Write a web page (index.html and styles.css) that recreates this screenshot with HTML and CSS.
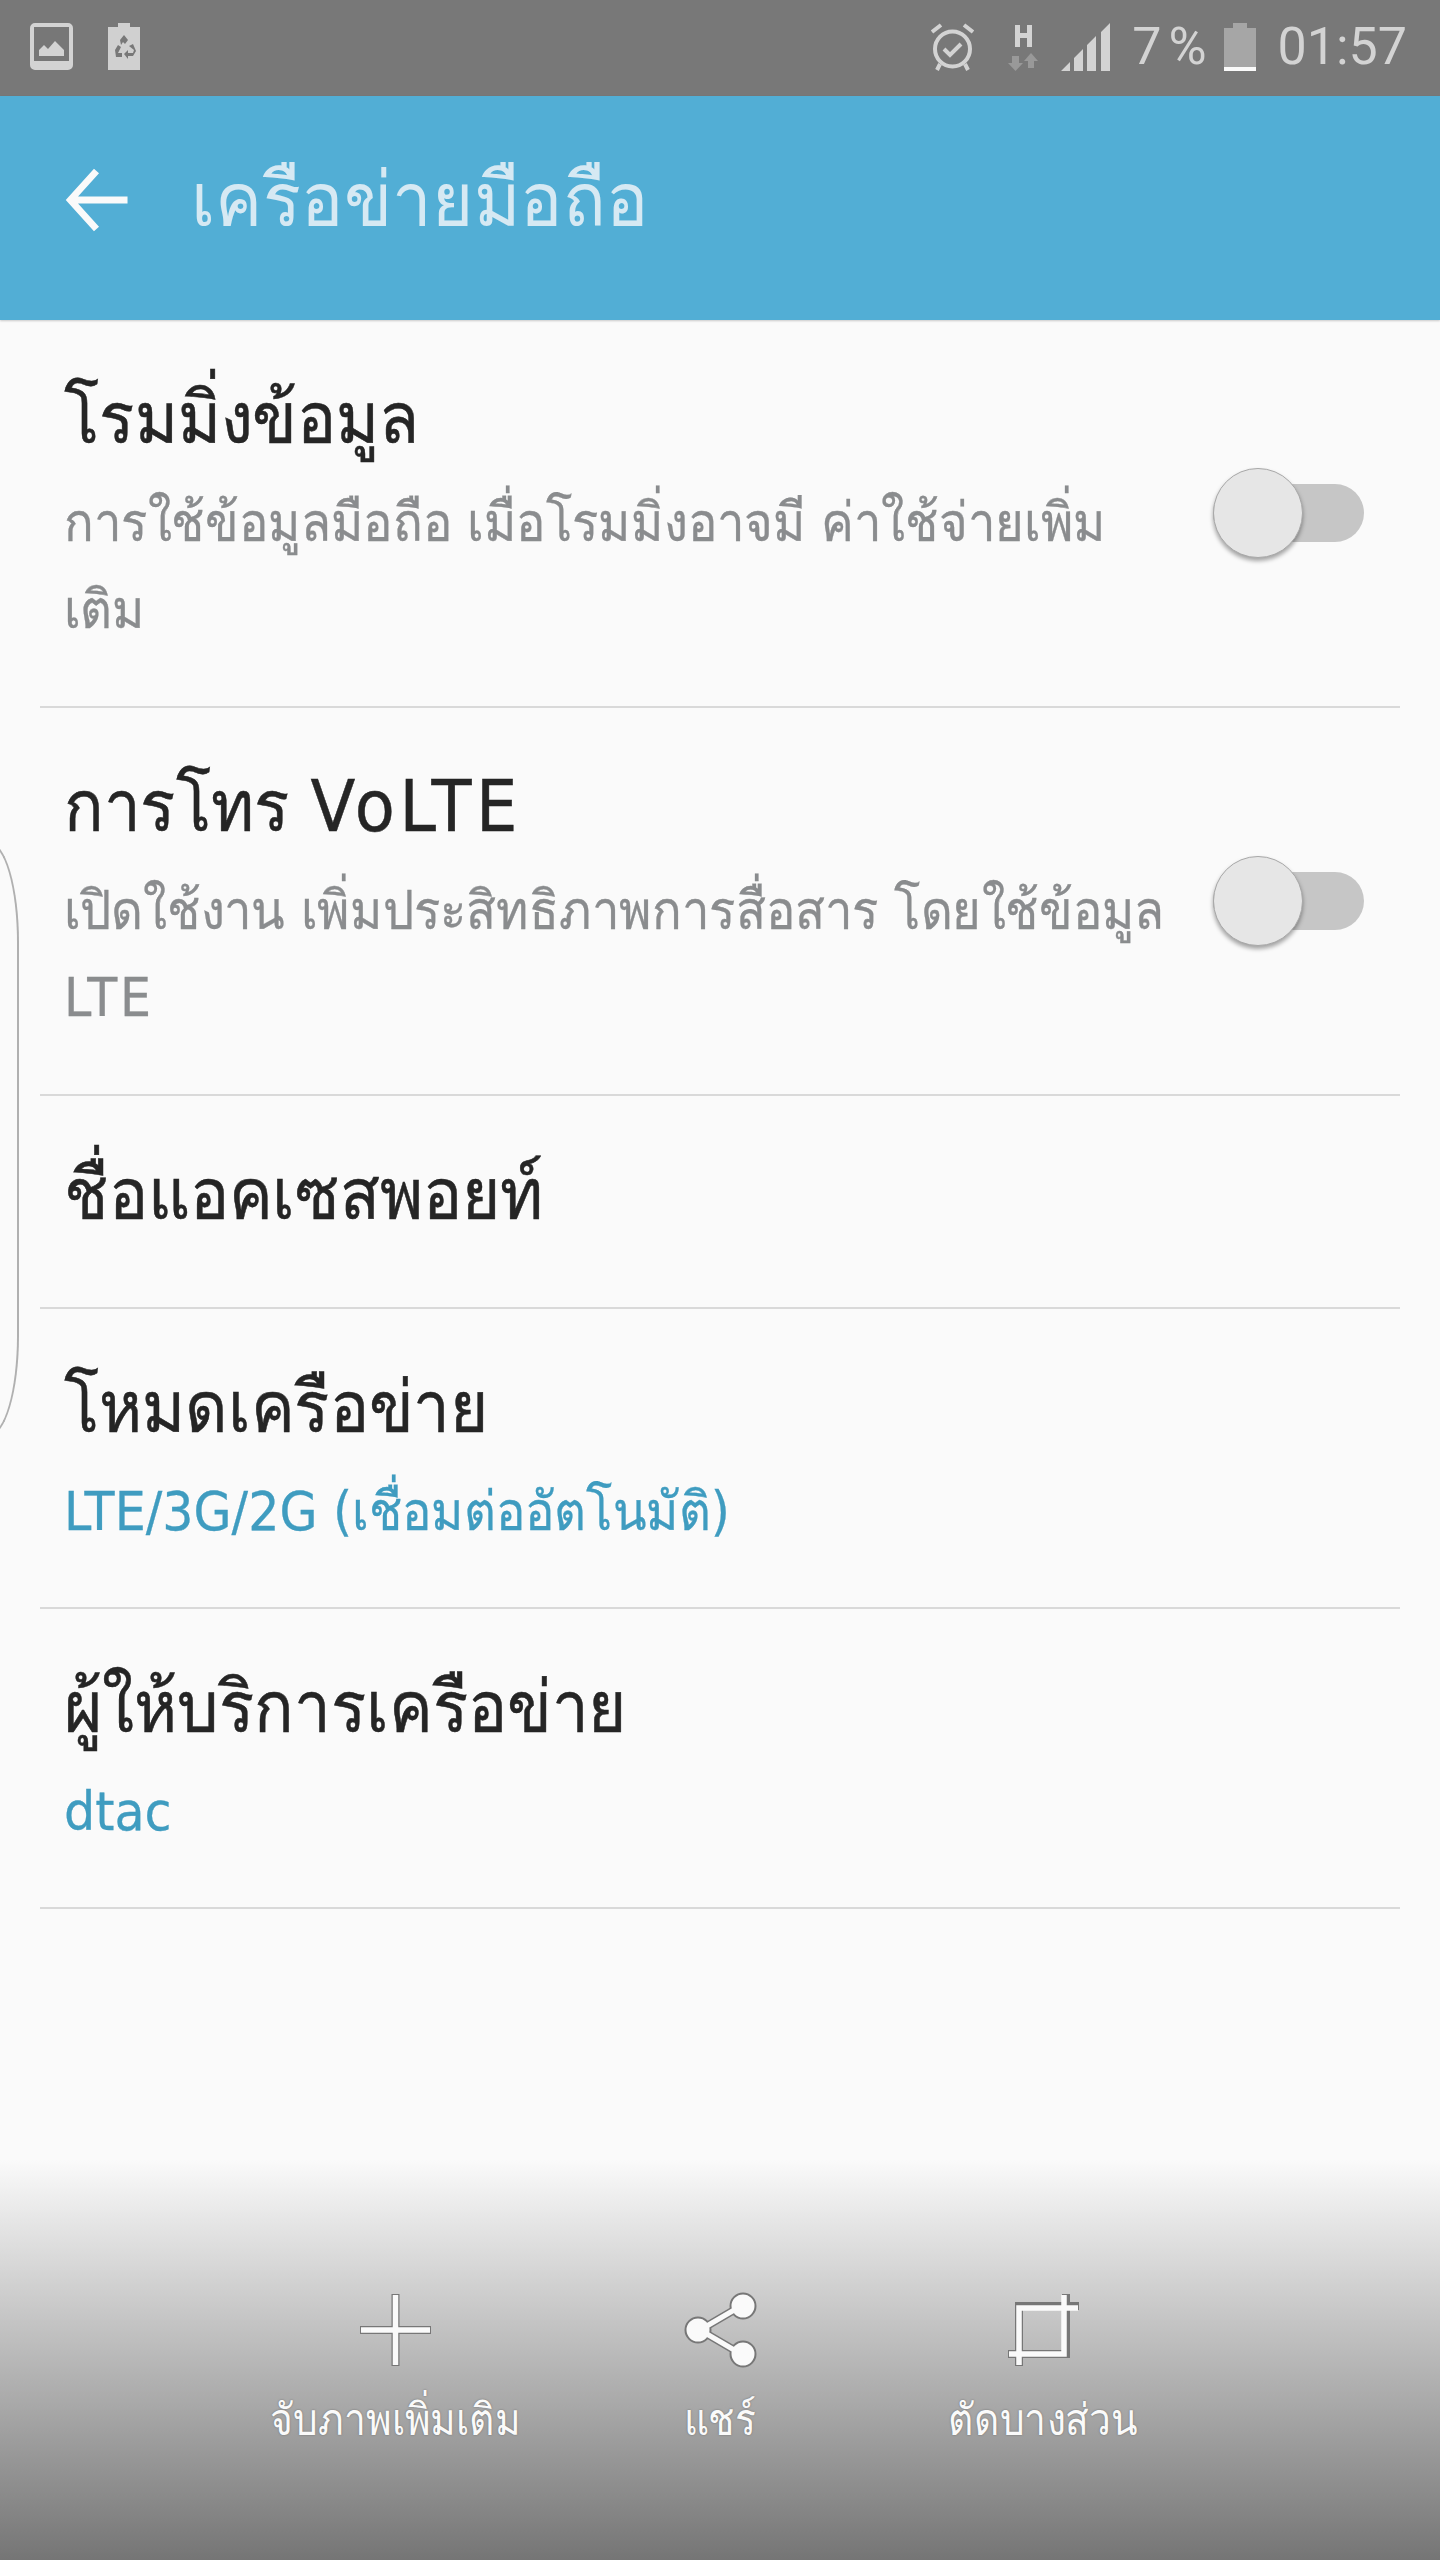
FILE: index.html
```html
<!DOCTYPE html>
<html lang="th">
<head>
<meta charset="utf-8">
<title>เครือข่ายมือถือ</title>
<link rel="stylesheet" href="styles.css">
</head>
<body>
<div class="phone">
  <div class="status">
    <div class="status-left">
      <svg class="ic-gallery" viewBox="0 0 43 47"><rect x="2" y="2" width="39" height="43" rx="3" fill="none" stroke="#d3d3d3" stroke-width="4"/><rect x="4" y="4" width="35" height="39" fill="#777"/><rect x="4" y="38" width="35" height="6" fill="#d3d3d3"/><path d="M9 33v-6l5-5 4 4 7-8 9 9v6z" fill="#d3d3d3"/></svg>
      <svg class="ic-recycle" viewBox="0 0 32 47"><path d="M10 0h12v4h10v43H0V4h10z" fill="#d0d0d0"/><path d="M12 17l4-5 4 5-3 4-2-2-2 3zM7 27l3-5 3 2-3 6h4v4H8zM21 23l4-2 3 7-3 5h-5v3l-4-5 4-4v3h5l1-3z" fill="#787878"/></svg>
    </div>
    <div class="status-right">
      <svg class="ic-alarm" viewBox="0 0 43 48"><path d="M1 9l9-7M42 9l-9-7" stroke="#d3d3d3" stroke-width="4" fill="none"/><circle cx="21.500" cy="26" r="17.500" fill="none" stroke="#d3d3d3" stroke-width="4"/><path d="M13 26l6 6 11-11" fill="none" stroke="#d3d3d3" stroke-width="4"/><path d="M9 41l-3 6M34 41l3 6" stroke="#d3d3d3" stroke-width="4"/></svg>
      <svg class="ic-net" viewBox="0 0 30 48"><path d="M9.500 2v22M21.500 2v22M9.500 12.500h12" stroke="#d3d3d3" stroke-width="5" fill="none"/><path d="M4 33h7v7h4l-7.500 8L0 40h4zM20 45v-7h-4l7-8 7 8h-4v7z" fill="#999"/></svg>
      <svg class="ic-signal" viewBox="0 0 49 48"><path d="M0 48l9-9v9zM13 48V35l9-9v22zM26 48V22l9-9v35zM40 48V9l9-9v48z" fill="#d3d3d3"/></svg>
      <span class="pct">7%</span>
      <svg class="ic-batt" viewBox="0 0 32 48"><path d="M9 0h14v5h9v43H0V5h9z" fill="#a6a6a6"/><rect y="44" width="32" height="4" fill="#fafafa"/></svg>
      <span class="clock">01:57</span>
    </div>
  </div>

  <header class="appbar">
    <svg class="ic-back" viewBox="0 0 64 66"><path d="M64 33H6M32 3L5 33l27 30" fill="none" stroke="#fafafa" stroke-width="7"/></svg>
    <h1 class="appbar-title">เครือข่ายมือถือ</h1>
  </header>

  <main class="list">
    <div class="row row-a">
      <div class="row-text">
        <div class="title">โรมมิ่งข้อมูล</div>
        <div class="sub">การใช้ข้อมูลมือถือ เมื่อโรมมิ่งอาจมี ค่าใช้จ่ายเพิ่ม<br>เติม</div>
      </div>
      <div class="switch"><span class="thumb"></span></div>
    </div>
    <div class="row row-a">
      <div class="row-text">
        <div class="title">การโทร <span class="lat-title">VoLTE</span></div>
        <div class="sub">เปิดใช้งาน เพิ่มประสิทธิภาพการสื่อสาร โดยใช้ข้อมูล<br><span class="lat-sub">LTE</span></div>
      </div>
      <div class="switch"><span class="thumb"></span></div>
    </div>
    <div class="row row-b">
      <div class="row-text"><div class="title">ชื่อแอคเซสพอยท์</div></div>
    </div>
    <div class="row row-c">
      <div class="row-text">
        <div class="title">โหมดเครือข่าย</div>
        <div class="link">LTE/3G/2G (เชื่อมต่ออัตโนมัติ)</div>
      </div>
    </div>
    <div class="row row-c">
      <div class="row-text">
        <div class="title">ผู้ให้บริการเครือข่าย</div>
        <div class="link">dtac</div>
      </div>
    </div>
  </main>

  <footer class="capture">
    <div class="action act-add">
      <svg class="ic-act" viewBox="0 0 75 76"><path d="M37.500 2v72M2 38h71" stroke="#777" stroke-width="8" fill="none"/><path d="M37.500 3v70M3 38h69" stroke="#fafafa" stroke-width="5.500" fill="none"/></svg>
      <span class="act-label">จับภาพเพิ่มเติม</span>
    </div>
    <div class="action act-share">
      <svg class="ic-act" viewBox="0 0 75 76"><g stroke="#777" stroke-width="2" fill="#fafafa"><path d="M17 38L58 14M17 38l41 24" stroke-width="8" fill="none"/><circle cx="15" cy="38" r="12.500"/><circle cx="60" cy="14" r="12.500"/><circle cx="60" cy="62" r="12.500"/></g><path d="M17 38L58 14M17 38l41 24" stroke="#fafafa" stroke-width="5" fill="none"/></svg>
      <span class="act-label">แชร์</span>
    </div>
    <div class="action act-crop">
      <svg class="ic-act" viewBox="0 0 75 76"><path d="M2 62h58V2M13 74V14h60" fill="none" stroke="#777" stroke-width="8"/><path d="M3 62h55V3M13 73V16h59" fill="none" stroke="#fafafa" stroke-width="5.500"/></svg>
      <span class="act-label">ตัดบางส่วน</span>
    </div>
  </footer>

  <div class="edge"></div>
</div>
</body>
</html>
```

FILE: styles.css
```css
* { box-sizing: border-box; }
html, body { margin: 0; padding: 0; }
body { background: #fafafa; font-family: "DejaVu Sans", "Noto Sans", sans-serif; }
.phone { position: relative; width: 1440px; height: 2560px; overflow: hidden; display: flex; flex-direction: column; background: #fafafa; }

.status { height: 96px; background: #787878; display: flex; justify-content: space-between; align-items: flex-start; padding: 23px 33px 0 30px; flex: none; }
.status-left { display: flex; gap: 35px; }
.status-right { display: flex; align-items: flex-start; }
.status svg { display: block; flex: none; }
.ic-gallery { width: 43px; height: 47px; }
.ic-recycle { width: 32px; height: 47px; }
.ic-alarm { width: 43px; height: 48px; }
.ic-net { width: 30px; height: 48px; margin-left: 34px; }
.ic-signal { width: 49px; height: 48px; margin-left: 23px; }
.ic-batt { width: 32px; height: 48px; margin-left: 10px; }
.pct, .clock { font-family: "Roboto", sans-serif; font-size: 52px; line-height: 48px; color: #d3d3d3; }
.pct { margin-left: 22px; letter-spacing: 7px; }
.clock { margin-left: 22px; font-weight: 400; }

.appbar { height: 224px; background: #52aed5; display: flex; align-items: center; gap: 63px; padding: 0 0 0 65px; flex: none; box-shadow: 0 1px 2px rgba(0,0,0,.2); position: relative; }
.ic-back { width: 63px; height: 64px; flex: none; margin-top: -16px; }
.appbar-title { margin: -16px 0 0; font-size: 76px; font-weight: 400; line-height: 100px; color: #d6e9f3; white-space: nowrap; transform: scaleX(.93); transform-origin: left center; }

.list { display: flex; flex-direction: column; padding: 0 40px; }
.row { display: flex; justify-content: space-between; border-bottom: 2px solid #d9d9d9; padding: 0 0 0 24px; }
.row-a { height: 388px; padding-top: 48px; }
.row-b { height: 213px; padding-top: 48px; }
.row-c { height: 300px; padding-top: 48px; }
.row-text { min-width: 0; flex: 1; }
.title, .sub, .link { white-space: nowrap; transform: scaleX(.91); transform-origin: left center; }
.title { font-size: 72px; line-height: 100px; color: #252525; -webkit-text-stroke: .5px #252525; }
.sub { font-size: 54px; line-height: 87px; color: #8a8c8e; margin-top: 11px; -webkit-text-stroke: .3px #8a8c8e; }
.link { font-size: 54px; line-height: 87px; color: #3f9cc0; margin-top: 11px; -webkit-text-stroke: .3px #3f9cc0; }
.lat-title { letter-spacing: 5px; }
.lat-sub { letter-spacing: 3px; }

.switch { position: relative; width: 151px; height: 58px; margin: 116px 36px 0 0; background: #c6c6c6; border-radius: 29px; flex: none; }
.thumb { position: absolute; left: 0; top: -16px; width: 90px; height: 90px; border-radius: 50%; background: #e6e6e6; border: 1.500px solid #a8a8a8; box-shadow: 0 3px 4px rgba(0,0,0,.35); }

.capture { margin-top: auto; height: 400px; background: linear-gradient(to bottom, #fafafa 0%, #757575 100%); position: relative; display: flex; }
.action { position: absolute; top: 132px; display: flex; flex-direction: column; align-items: center; width: 300px; }
.act-add { left: 245px; }
.act-share { left: 570px; }
.act-crop { left: 893px; }
.ic-act { width: 75px; height: 76px; display: block; }
.act-label { font-size: 44px; line-height: 60px; margin-top: 22px; color: #fafafa; white-space: nowrap; text-shadow: 0 0 2px #666; transform: scaleX(.885); }

.edge { position: absolute; left: -61px; top: 842px; width: 80px; height: 594px; border: 2px solid #b0b0b0; border-left: 0; border-radius: 0 30px 30px 0 / 0 100px 100px 0; }
```
